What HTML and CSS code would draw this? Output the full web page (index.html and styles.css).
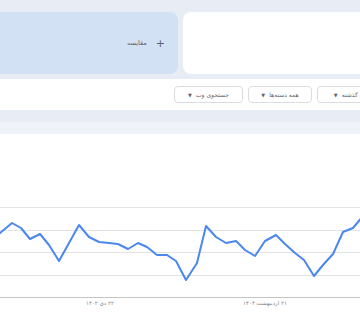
FILE: index.html
```html
<!DOCTYPE html>
<html lang="fa" dir="rtl">
<head>
<meta charset="utf-8">
<link rel="stylesheet" href="styles.css">
</head>
<body>
<div class="page">
  <div class="terms">
    <div class="card term"></div>
    <div class="card compare"><span class="plus">+</span><span class="compare-label">مقایسه</span></div>
  </div>
  <div class="filterbar">
    <div class="filters">
      <div class="btn region">ایران<span class="arrow">▼</span></div>
      <div class="btn time">۱۲ ماه گذشته<span class="arrow">▼</span></div>
      <div class="btn cats">همه دسته‌ها<span class="arrow">▼</span></div>
      <div class="btn type">جستجوی وب<span class="arrow">▼</span></div>
    </div>
  </div>
  <div class="chartcard">
    <div class="chart-head"></div>
    <div class="chart-body">
      <svg class="chart" width="360" height="190" viewBox="0 0 360 190" dir="ltr">
        <g stroke="#e3e3e3" stroke-width="1">
          <line x1="0" y1="73.5" x2="360" y2="73.5"/>
          <line x1="0" y1="96.5" x2="360" y2="96.5"/>
          <line x1="0" y1="118.5" x2="360" y2="118.5"/>
          <line x1="0" y1="141.5" x2="360" y2="141.5"/>
        </g>
        <line x1="0" y1="163.5" x2="360" y2="163.5" stroke="#c4c4c4" stroke-width="1"/>
        <polyline fill="none" stroke="#4a87ee" stroke-width="2" stroke-linejoin="round" points="-2,101 0,99 12,89 21,94 30,105 40,100 49,111 59,127 79,91 89,103 99,108 109,109 118,110 128,115 138,109 147,113 157,121 167,121 176,127 186,146 197,129 206,92 216,103 226,109 236,107 245,116 255,122 265,107 276,101 285,110 295,119 304,126 314,142 323,131 333,120 343,98 353,94 363,82"/>
        <text x="100" y="171" class="axis-label" text-anchor="middle">۲۲ دی ۱۴۰۲</text>
        <text x="265" y="171" class="axis-label" text-anchor="middle">۲۱ اردیبهشت ۱۴۰۳</text>
      </svg>
    </div>
  </div>
</div>
</body>
</html>
```
FILE: styles.css
```css
html, body {
  margin: 0;
  padding: 0;
  background: #e8ecf4;
  overflow: hidden;
  width: 360px;
  height: 320px;
}
body {
  font-family: "DejaVu Sans", "Noto Sans", sans-serif;
  color: #5f6368;
}
.page {
  width: 360px;
  padding-top: 12px;
}
.terms {
  display: flex;
  gap: 5px;
  margin-left: -12px;
  margin-right: -24px;
  height: 62px;
}
.card {
  border-radius: 8px;
}
.term {
  background: #ffffff;
  flex: 1;
}
.compare {
  background: #d3e1f4;
  width: 190px;
  flex: none;
  display: flex;
  align-items: center;
  padding-right: 13px;
  box-sizing: border-box;
  gap: 9px;
  font-size: 6.5px;
  color: #5f6368;
}
.plus {
  font-size: 11px;
  line-height: 1;
  color: #5f6368;
}
.filterbar {
  margin-top: 5px;
  background: #ffffff;
  height: 31px;
  display: flex;
  align-items: center;
  overflow: hidden;
}
.filters {
  display: flex;
  gap: 5px;
  margin-right: -100px;
}
.btn {
  height: 15px;
  border: 1px solid #dadce0;
  border-radius: 4px;
  background: #fff;
  display: flex;
  align-items: center;
  justify-content: center;
  gap: 4px;
  font-size: 6px;
  color: #5f6368;
  box-sizing: content-box;
}
.arrow {
  font-size: 5px;
  color: #5f6368;
}
.region { width: 60px; }
.time { width: 74px; }
.cats { width: 62px; }
.type { width: 67px; }
.chartcard {
  margin-top: 12px;
}
.chart-head {
  height: 12px;
  background: #eff2f8;
}
.chart-body {
  background: #ffffff;
  height: 200px;
}
.chart {
  display: block;
}
.axis-label {
  font-family: "DejaVu Sans", sans-serif;
  font-size: 5.5px;
  fill: #80868b;
}
```
